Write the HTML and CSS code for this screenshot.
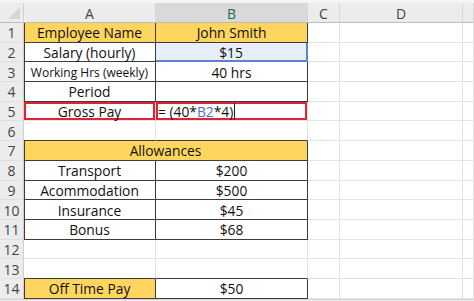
FILE: index.html
```html
<!DOCTYPE html>
<html lang="en">
<head>
    <meta charset="UTF-8">
    <title>Gross Pay</title>
    <link rel="stylesheet" href="styles.css">
</head>
<body>
    <div class="sheet">
        <!-- top strip -->
        <div class="strip"></div>

        <!-- column headers -->
        <div class="corner"><span class="tri"></span></div>
        <div class="col-head">A</div>
        <div class="col-head active">B</div>
        <div class="col-head">C</div>
        <div class="col-head">D</div>
        <div class="col-head"></div>

        <!-- row 1 -->
        <div class="row-head">1</div>
        <div class="cell box left gold">Employee Name</div>
        <div class="cell box gold">John Smith</div>
        <div class="cell"></div><div class="cell"></div><div class="cell"></div>

        <!-- row 2 -->
        <div class="row-head">2</div>
        <div class="cell box left">Salary (hourly)</div>
        <div class="cell box selected">$15</div>
        <div class="cell"></div><div class="cell"></div><div class="cell"></div>

        <!-- row 3 -->
        <div class="row-head">3</div>
        <div class="cell box left small">Working Hrs (weekly)</div>
        <div class="cell box">40 hrs</div>
        <div class="cell"></div><div class="cell"></div><div class="cell"></div>

        <!-- row 4 -->
        <div class="row-head">4</div>
        <div class="cell box left">Period</div>
        <div class="cell box"></div>
        <div class="cell"></div><div class="cell"></div><div class="cell"></div>

        <!-- row 5 -->
        <div class="row-head">5</div>
        <div class="cell red">Gross Pay</div>
        <div class="cell red formula">= (40*<span class="ref">B2</span>*4)<span class="caret"></span></div>
        <div class="cell"></div><div class="cell"></div><div class="cell"></div>

        <!-- row 6 -->
        <div class="row-head">6</div>
        <div class="cell under"></div>
        <div class="cell under"></div>
        <div class="cell"></div><div class="cell"></div><div class="cell"></div>

        <!-- row 7 -->
        <div class="row-head">7</div>
        <div class="cell box left gold span2">Allowances</div>
        <div class="cell"></div><div class="cell"></div><div class="cell"></div>

        <!-- row 8 -->
        <div class="row-head">8</div>
        <div class="cell box left">Transport</div>
        <div class="cell box">$200</div>
        <div class="cell"></div><div class="cell"></div><div class="cell"></div>

        <!-- row 9 -->
        <div class="row-head">9</div>
        <div class="cell box left">Acommodation</div>
        <div class="cell box">$500</div>
        <div class="cell"></div><div class="cell"></div><div class="cell"></div>

        <!-- row 10 -->
        <div class="row-head">10</div>
        <div class="cell box left">Insurance</div>
        <div class="cell box">$45</div>
        <div class="cell"></div><div class="cell"></div><div class="cell"></div>

        <!-- row 11 -->
        <div class="row-head">11</div>
        <div class="cell box left">Bonus</div>
        <div class="cell box">$68</div>
        <div class="cell"></div><div class="cell"></div><div class="cell"></div>

        <!-- row 12 -->
        <div class="row-head">12</div>
        <div class="cell"></div><div class="cell"></div>
        <div class="cell"></div><div class="cell"></div><div class="cell"></div>

        <!-- row 13 -->
        <div class="row-head">13</div>
        <div class="cell under"></div>
        <div class="cell under"></div>
        <div class="cell"></div><div class="cell"></div><div class="cell"></div>

        <!-- row 14 -->
        <div class="row-head">14</div>
        <div class="cell box left gold">Off Time Pay</div>
        <div class="cell box">$50</div>
        <div class="cell"></div><div class="cell"></div><div class="cell"></div>

        <!-- bottom edge -->
        <div class="foot"></div>
    </div>
</body>
</html>
```

FILE: styles.css
```css
/* sheet layout */
body {
    margin: 0;
    background-color: #ffffff;
    font-family: "Open Sans", "Liberation Sans", sans-serif;
    overflow: hidden;
}

.sheet {
    display: grid;
    grid-template-columns: 24px 132px 152px 32px 123px 1fr;
    grid-template-rows: 3px 20px repeat(14, 19.7px) 1fr;
    width: 474px;
    height: 301px;
}

.strip {
    grid-column: 1 / -1;
    background-color: #f4f4f4;
}

.foot {
    grid-column: 1 / -1;
    background-color: #ededed;
    border-top: 1px solid #d4d4d4;
}

/* headers */
.corner,
.col-head,
.row-head {
    background-color: #ececec;
    color: #444444;
    box-sizing: border-box;
    display: flex;
    align-items: center;
    justify-content: center;
    font-size: 14px;
}

.corner {
    position: relative;
    border-right: 1px solid #cfcfcf;
    border-bottom: 1px solid #bdbdbd;
}

.tri {
    position: absolute;
    right: 3px;
    bottom: 3px;
    width: 0;
    height: 0;
    border-left: 12px solid transparent;
    border-bottom: 12px solid #d6d6d6;
}

.col-head {
    border-right: 1px solid #d6d6d6;
    border-bottom: 1px solid #bdbdbd;
    padding-top: 1px;
}

.col-head.active {
    background-color: #d9d9d9;
    color: #1f6b43;
}

.row-head {
    border-right: 1px solid #cfcfcf;
    border-bottom: 1px solid #dedede;
    padding-top: 1px;
}

/* cells */
.cell {
    box-sizing: border-box;
    border-right: 1px solid #e3e3e3;
    border-bottom: 1px solid #e3e3e3;
    display: flex;
    align-items: center;
    justify-content: center;
    font-size: 13.8px;
    color: #111111;
    white-space: nowrap;
    padding-top: 1px;
}

.cell.small {
    font-size: 12px;
}

.box {
    border-right-color: #3c3c3c;
    border-bottom-color: #3c3c3c;
}

.box.left {
    box-shadow: inset 1px 0 0 #3c3c3c;
}

.under {
    border-bottom-color: #3c3c3c;
}

.gold {
    background-color: #fed65f;
}

.span2 {
    grid-column: span 2;
}

.selected {
    background-color: #e8eef8;
    border-right: 2px solid #5a83d4;
    border-bottom: 2px solid #5a83d4;
}

.red {
    border-color: #e3e3e3;
    box-shadow: inset 0 0 0 2px #e2222e;
}

.formula {
    justify-content: flex-start;
    padding-left: 2px;
}

.ref {
    color: #4a72c6;
}

.caret {
    display: inline-block;
    width: 1px;
    height: 17px;
    margin-left: 1px;
    background-color: #1b1b1b;
}
```
